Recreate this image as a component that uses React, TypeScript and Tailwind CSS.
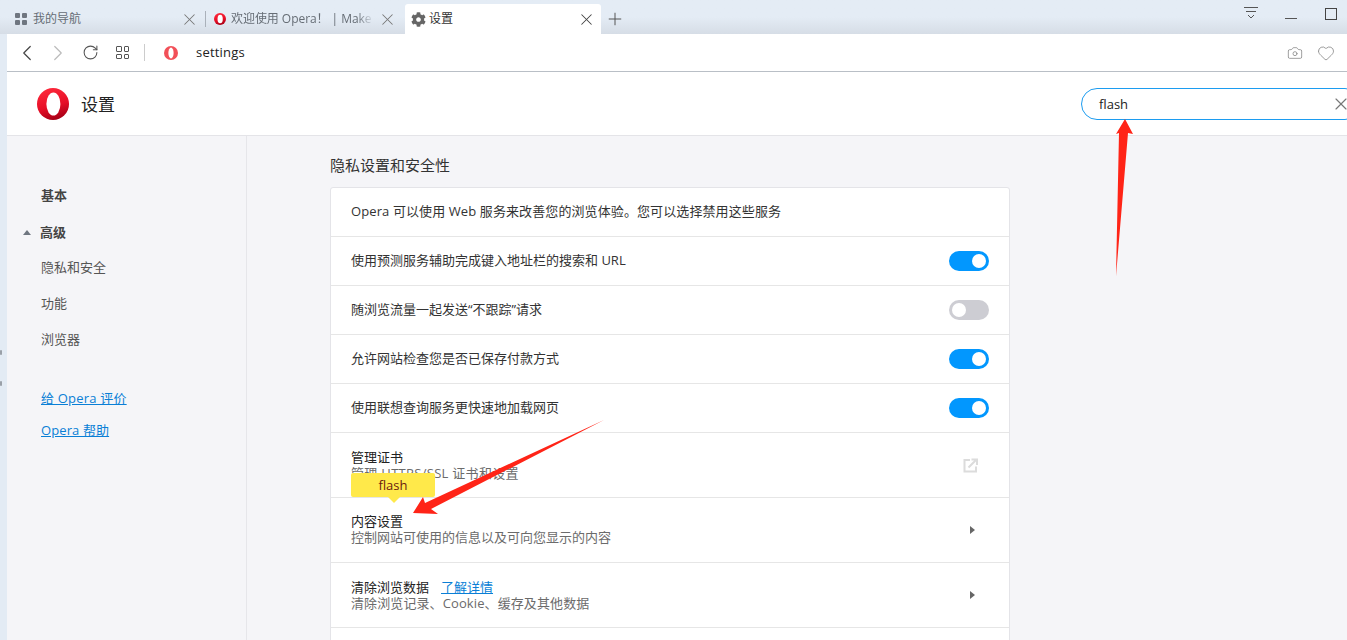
import { ChevronLeft, ChevronRight, RotateCw, Camera, Heart, X, Plus } from 'lucide-react'
import { FaCog } from 'react-icons/fa'

function OperaLogo({ size, id }: { size: number; id: string }) {
  return (
    <svg width={size} height={size} viewBox="0 0 32 32" className="shrink-0">
      <defs>
        <linearGradient id={id} x1="0.2" y1="0" x2="0.5" y2="1">
          <stop offset="0" stopColor="#ff2a3c" />
          <stop offset="0.6" stopColor="#e60f27" />
          <stop offset="1" stopColor="#a80016" />
        </linearGradient>
      </defs>
      <circle cx="16" cy="16" r="16" fill={`url(#${id})`} />
      <ellipse cx="16.4" cy="16" rx="7" ry="11.5" fill="#fff" />
    </svg>
  )
}

function Tiles({ className }: { className: string }) {
  return (
    <div className={`grid grid-cols-2 gap-[2px] shrink-0 ${className}`}>
      <span className="bg-[#6f7680] rounded-[1px]" />
      <span className="bg-[#6f7680] rounded-[1px]" />
      <span className="bg-[#6f7680] rounded-[1px]" />
      <span className="bg-[#6f7680] rounded-[1px]" />
    </div>
  )
}

function Toggle({ on }: { on: boolean }) {
  return (
    <span className={`flex items-center w-10 h-5 rounded-full px-[3px] ${on ? 'bg-[#0297fe] justify-end' : 'bg-[#cdcdd3] justify-start'}`}>
      <span className="w-[14px] h-[14px] rounded-full bg-white" />
    </span>
  )
}

const toggleRows = [
  { label: '使用预测服务辅助完成键入地址栏的搜索和 URL', on: true },
  { label: '随浏览流量一起发送“不跟踪”请求', on: false },
  { label: '允许网站检查您是否已保存付款方式', on: true },
  { label: '使用联想查询服务更快速地加载网页', on: true },
]

export default function App() {
  return (
    <div className="relative w-[1347px] h-[640px] overflow-hidden flex flex-col bg-[#e3ebf4] text-[13px] text-[#333] font-['Open_Sans','Noto_Sans_CJK_SC',sans-serif]">
      {/* tabs */}
      <div className="h-[34px] shrink-0 flex bg-gradient-to-b from-[#e4ecf5] from-50% to-[#d6dde6] text-[#666d75] text-[12px]">
        <div className="w-[206px] flex items-center pt-[4px] pl-[15px]">
          <Tiles className="w-3 h-3" />
          <span className="flex-1 ml-[6px]">我的导航</span>
          <X size={19} strokeWidth={1.3} className="text-[#777]" />
          <span className="w-px h-4 bg-[#aab1ba] ml-[6px]" />
        </div>
        <div className="w-[199px] flex items-center pt-[4px] pl-[8px]">
          <OperaLogo size={12} id="tab-logo" />
          <span className="w-[143px] ml-[5px] overflow-hidden whitespace-nowrap tracking-[-0.05px] [mask-image:linear-gradient(to_right,black_88%,transparent)]">欢迎使用 Opera！ | Make</span>
          <X size={19} strokeWidth={1.3} className="text-[#777] ml-[4px]" />
        </div>
        <div className="w-[196px] mt-[4px] flex items-center pl-[6px] pr-[5px] bg-white rounded-t-[3px] text-[#333]">
          <FaCog size={15} className="text-[#666]" />
          <span className="flex-1 ml-[3px]">设置</span>
          <X size={19} strokeWidth={1.3} className="text-[#444]" />
        </div>
        <div className="w-[28px] flex items-center justify-center pt-[3px]">
          <Plus size={20} strokeWidth={1.2} className="text-[#555]" />
        </div>
        <div className="flex-1 flex items-start justify-end pt-[7px] pr-[10px]">
          <svg width="14" height="12" viewBox="0 0 14 12" fill="none" stroke="#555" strokeWidth="1">
            <path d="M0 .5h14M2 4.5h10M4 8l3 3 3-3" />
          </svg>
          <span className="w-3 h-px bg-[#555] mt-[11px] ml-[27px]" />
          <span className="w-3 h-3 border border-[#444] mt-px ml-[28px]" />
        </div>
      </div>

      <div className="flex-1 min-h-0 ml-[7px] flex flex-col bg-white">
        {/* toolbar */}
        <div className="h-[38px] shrink-0 flex items-center border-b border-[#b9bfc6] pl-[7px] pr-[12px]">
          <ChevronLeft size={26} strokeWidth={1.1} className="text-[#444]" />
          <ChevronRight size={26} strokeWidth={1.1} className="text-[#bbb] ml-[5px]" />
          <RotateCw size={17} strokeWidth={1.5} className="text-[#555] ml-[11px]" />
          <div className="grid grid-cols-2 gap-[2px] w-[13px] h-[13px] ml-[17px]">
            <span className="border border-[#555] rounded-[1px]" />
            <span className="border border-[#555] rounded-[1px]" />
            <span className="border border-[#555] rounded-[1px]" />
            <span className="border border-[#555] rounded-[1px]" />
          </div>
          <span className="w-px h-[17px] bg-[#ccc] ml-[15px]" />
          <svg width="14" height="14" viewBox="0 0 32 32" className="ml-[19px]">
            <circle cx="16" cy="16" r="16" fill="#f25058" />
            <ellipse cx="16" cy="16" rx="6" ry="12.5" fill="#fff" />
          </svg>
          <span className="ml-[18px] text-[13px] text-[#222] tracking-[0.2px]">settings</span>
          <div className="flex-1" />
          <Camera size={16} strokeWidth={1.2} className="text-[#888]" />
          <Heart size={18} strokeWidth={1.1} className="text-[#888] ml-[14px]" />
        </div>

        {/* page header */}
        <div className="h-[64px] shrink-0 flex items-center border-b border-[#e4e4e8] pl-[30px]">
          <OperaLogo size={32} id="page-logo" />
          <span className="ml-[12px] pt-[2px] text-[17px] text-[#222]">设置</span>
          <div className="flex-1" />
          <div className="w-[280px] -mr-[14px] h-8 rounded-full border border-[#1c9cf0] flex items-center pl-[17px] pr-[9px]">
            <span className="flex-1 pt-[2px] text-[13px] text-[#222]">flash</span>
            <X size={20} strokeWidth={1.4} className="text-[#777]" />
          </div>
        </div>

        <div className="flex-1 min-h-0 flex bg-[#f5f5f8]">
          {/* sidebar */}
          <div className="w-[240px] shrink-0 border-r border-[#e6e6ea] pt-[42px] text-[#555]">
            <div className="h-9 flex items-center pl-[34px] font-semibold text-[#444]">基本</div>
            <div className="h-9 flex items-center pl-[16px] pt-px font-semibold text-[#444]">
              <span className="w-0 h-0 border-x-4 border-x-transparent border-b-[5px] border-b-[#6f7680] mr-[9px]" />
              高级
            </div>
            <div className="h-9 flex items-center pl-[34px]">隐私和安全</div>
            <div className="h-9 flex items-center pl-[34px]">功能</div>
            <div className="h-9 flex items-center pl-[34px]">浏览器</div>
            <div className="h-8 mt-[25px] flex items-center pl-[34px] text-[#0a7fd6] underline tracking-[0.2px]">给 Opera 评价</div>
            <div className="h-8 flex items-center pl-[34px] text-[#0a7fd6] underline tracking-[0.1px]">Opera 帮助</div>
          </div>

          {/* content */}
          <div className="flex-1 min-w-0 pl-[83px]">
            <h2 className="h-[51px] flex items-center pt-[8px] text-[15px] font-normal text-[#333]">隐私设置和安全性</h2>
            <div className="w-[680px] bg-white border border-[#e4e4e8] rounded-[3px]">
              <div className="h-[49px] flex items-center px-5 border-b border-[#e6e6e6] text-[#333] tracking-[0.1px]">
                Opera 可以使用 Web 服务来改善您的浏览体验。您可以选择禁用这些服务
              </div>
              {toggleRows.map((row) => (
                <div key={row.label} className="h-[49px] flex items-center justify-between px-5 border-b border-[#e6e6e6]">
                  <span>{row.label}</span>
                  <Toggle on={row.on} />
                </div>
              ))}
              <div className="h-[65px] flex items-center justify-between pl-5 pr-[31px] border-b border-[#e6e6e6] leading-4">
                <div className="pb-px">
                  <div className="text-[#222]">管理证书</div>
                  <div className="text-[#6b6b6b] tracking-[0.3px]">管理 HTTPS/SSL 证书和设置</div>
                </div>
                <svg width="15" height="15" viewBox="0 0 15 15" fill="none" stroke="#dcdcdc" strokeWidth="2">
                  <path d="M7 2H1.500v11.500h11.500V8.500" />
                  <path d="M5.500 9.500L13 2M8.500 1.500h5.500V7" />
                </svg>
              </div>
              <div className="h-[65px] flex items-center justify-between pl-5 pr-[34px] border-b border-[#e6e6e6] leading-4">
                <div className="pb-[2px]">
                  <div className="text-[#222]">内容设置</div>
                  <div className="text-[#6b6b6b]">控制网站可使用的信息以及可向您显示的内容</div>
                </div>
                <span className="w-0 h-0 border-y-4 border-y-transparent border-l-[5px] border-l-[#666]" />
              </div>
              <div className="h-[65px] flex items-center justify-between pl-5 pr-[34px] border-b border-[#e6e6e6] leading-4">
                <div className="pb-px">
                  <div className="text-[#222]">
                    清除浏览数据
                    <span className="ml-3 text-[#0a7fd6] underline">了解详情</span>
                  </div>
                  <div className="text-[#6b6b6b] tracking-[0.1px]">清除浏览记录、Cookie、缓存及其他数据</div>
                </div>
                <span className="w-0 h-0 border-y-4 border-y-transparent border-l-[5px] border-l-[#666]" />
              </div>
              <div className="h-[49px]" />
            </div>
          </div>
        </div>
      </div>

      {/* yellow search bubble */}
      <div className="absolute left-[351px] top-[473px] w-[84px] h-6 rounded-[2px] bg-[#ffe94a] flex items-center justify-center pt-px text-[13px] text-[#6a1a10]">
        flash
        <span className="absolute left-[37px] top-6 w-0 h-0 border-x-[6px] border-x-transparent border-t-[6px] border-t-[#ffe94a]" />
      </div>

      {/* hand-drawn red arrows */}
      <svg className="absolute inset-0 pointer-events-none" width="1347" height="640" viewBox="0 0 1347 640">
        <polygon points="1125,119 1133,134 1128,133 1116,276 1119,133 1116,134" fill="#ff2417" />
        <polygon points="413,513 423,497 425,503 604,420 431,509 438,514" fill="#ff2417" />
      </svg>

      {/* specks on the left edge */}
      <span className="absolute left-0 top-[350px] w-[2px] h-[5px] rounded-full bg-[#9aa0a8]" />
      <span className="absolute left-0 top-[381px] w-[2px] h-[5px] rounded-full bg-[#9aa0a8]" />
    </div>
  )
}
